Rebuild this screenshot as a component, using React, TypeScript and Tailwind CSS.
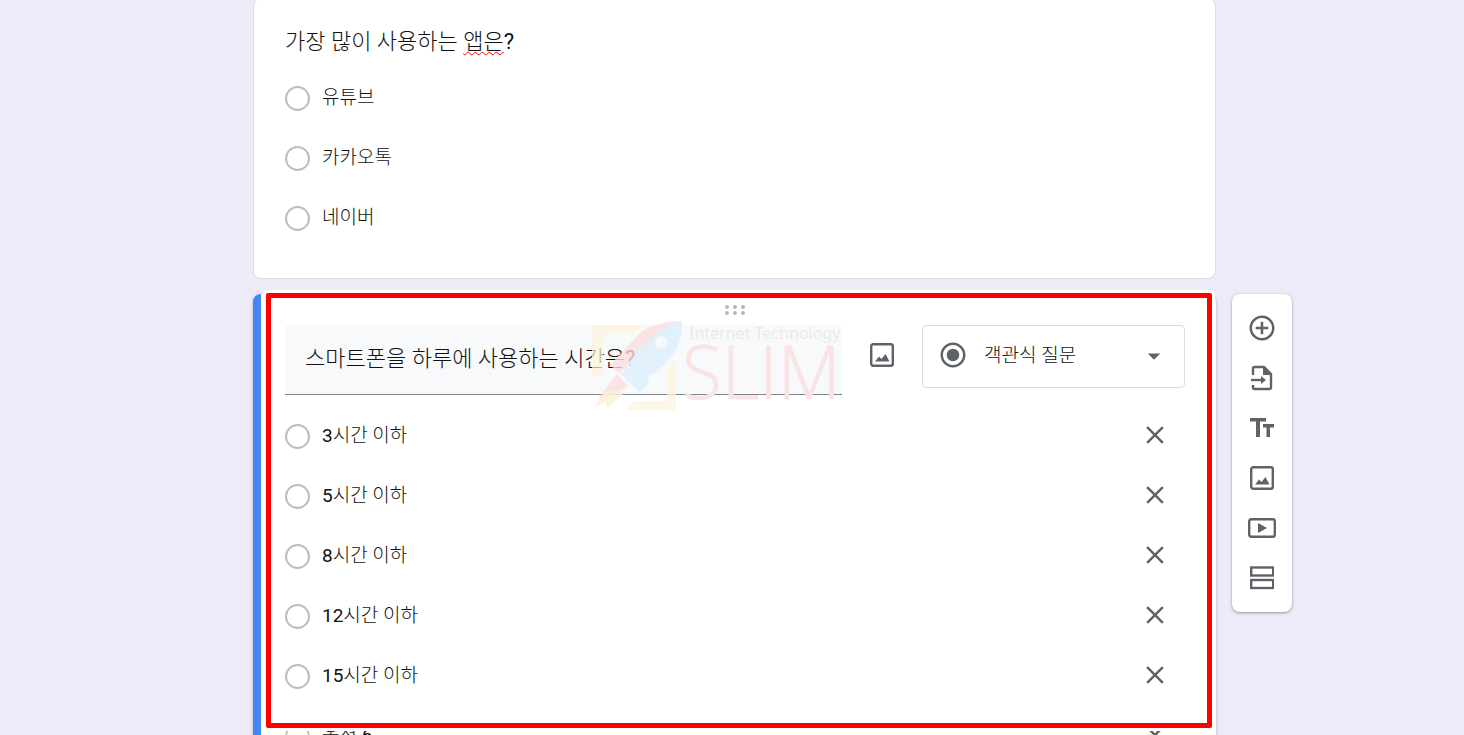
import { MdAddCircleOutline, MdArrowDropDown, MdClose, MdRadioButtonChecked } from 'react-icons/md';

const answers = ['유튜브', '카카오톡', '네이버'];
const options = ['3시간 이하', '5시간 이하', '8시간 이하', '12시간 이하', '15시간 이하', '옵션 6'];

function ImageIcon() {
  return <svg viewBox="0 0 24 24" className="size-6" fill="none">
    <rect x="1.200" y="1.200" width="21.600" height="21.600" rx="2" stroke="currentColor" strokeWidth="2.400"/>
    <path d="M5 18.500l4-5 2.500 2.500 4-5 4 7.500z" fill="currentColor"/>
  </svg>
}

function ImportIcon() {
  return <svg viewBox="0 0 22 26" className="h-[26px] w-[22px]" fill="none">
    <path d="M2 10V3.500C2 2.500 2.500 2 3.500 2H13l7 7v13.500c0 1-.5 1.500-1.500 1.500h-15C2.500 24 2 23.500 2 22.500V20" stroke="currentColor" strokeWidth="2.400"/>
    <path d="M12 1v9h9zM10 11l5 4-5 4z" fill="currentColor"/>
    <path d="M0 15h11" stroke="currentColor" strokeWidth="2.400"/>
  </svg>
}

function TextIcon() {
  return <svg viewBox="0 0 24 20" className="h-5 w-6" fill="currentColor">
    <path d="M0 0h16v3.500h-6V19H6V3.500H0zM13 6h11v3.500h-4V19h-3.500V9.500H13z"/>
  </svg>
}

function VideoIcon() {
  return <svg viewBox="0 0 28 20" className="h-5 w-7" fill="none">
    <rect x="1.200" y="1.200" width="25.600" height="17.600" rx="2" stroke="currentColor" strokeWidth="2.400"/>
    <path d="M10 5v10l9-5z" fill="currentColor"/>
  </svg>
}

function SectionIcon() {
  return <svg viewBox="0 0 24 24" className="size-6" fill="none" stroke="currentColor" strokeWidth="2.400">
    <rect x="1.200" y="1.500" width="22" height="8"/>
    <rect x="1.200" y="14" width="22" height="8"/>
  </svg>
}

function Watermark() {
  return <svg viewBox="0 0 256 92" className="pointer-events-none absolute top-[27px] left-[327px] h-[92px] w-[256px]">
    <path d="M4 58V4h52l-13 9H15v38zM79 49l9-9v49H38l8-9h33z" fill="#fdf3da" fillOpacity="0.7"/>
    <path d="M94 0C77 0 61 4 51 13L22 44l9 8 48-37z" fill="#f9dedd" fillOpacity="0.8"/>
    <path d="M94 0C78 4 64 14 51 28L33 53l19 19 9-10-1-6C79 44 96 26 94 0z" fill="#dff0fb" fillOpacity="0.9"/>
    <circle cx="73" cy="21" r="6" fill="#f8f9fa"/>
    <path d="M29 53l11 12-16 9-14 4z" fill="#f9dedd" fillOpacity="0.8"/>
    <path d="M18 70L5 88l13-7 1 7 19-18z" fill="#fdf0cf" fillOpacity="0.8"/>
    <text x="101" y="18" fontSize="16" fill="#e9eaed" fontFamily="Noto Sans, sans-serif">Internet Technology</text>
    <text x="94" y="78" fontSize="73" fontWeight="300" fill="#f9e4e5" stroke="#f9e4e5" fontFamily="Open Sans, sans-serif">SLIM</text>
  </svg>
}

export default function App() {
  return <div className="h-screen overflow-hidden bg-[#eeeaf8] pr-[172px] pl-[253px] font-[Roboto,'Noto_Sans_CJK_KR_Light','Noto_Sans_CJK_KR',sans-serif] text-[19px] text-[#111111]">
    <section className="-mt-0.5 mr-[76px] h-[281px] rounded-lg border border-[#dadce0] bg-white px-[31px] pt-[27px]">
      <h2 className="mb-[10px] text-[22px] leading-8">
        가장 많이 사용하는 <span className="underline decoration-[#ff0000] decoration-wavy decoration-1 underline-offset-2">앱은</span>?
      </h2>
      {answers.map((answer) => (
        <label key={answer} className="flex h-[60px] items-center gap-3">
          <input type="radio" name="app" className="size-[25px] appearance-none rounded-full border-2 border-[#bdbdbd]"/>
          <span className="leading-6">{answer}</span>
        </label>
      ))}
    </section>

    <div className="mt-[15px] flex items-start gap-4">
      <section className="relative min-w-0 flex-1 rounded-lg border-l-8 border-[#4285f4] bg-white pr-[31px] pl-6 shadow-[0_1px_3px_rgba(60,64,67,0.4)]">
        <button aria-label="질문 이동" className="absolute top-[11px] right-[7px] left-0 mx-auto grid w-5 grid-cols-3 gap-x-1 gap-y-0.5">
          {[0, 1, 2, 3, 4, 5].map((n) => <span key={n} className="size-1 rounded-full bg-[#b4b6b8]"/>)}
        </button>

        <div className="relative flex items-start pt-[31px]">
          <input
            aria-label="질문"
            defaultValue="스마트폰을 하루에 사용하는 시간은?"
            className="h-[70px] min-w-0 flex-1 rounded-t border-b border-[#80868b] bg-[#f8f9fb] px-5 pb-2 text-[22px]"
          />
          <button aria-label="이미지 추가" className="mx-7 mt-[18px] text-[#5f6368]"><ImageIcon/></button>
          <div className="relative h-[63px] w-[263px]">
            <select aria-label="질문 유형" className="size-full appearance-none rounded border border-[#dadce0] bg-transparent pl-[61px]">
              <option>객관식 질문</option>
            </select>
            <MdRadioButtonChecked className="pointer-events-none absolute top-[15px] left-4 size-[30px] text-[#5f6368]"/>
            <MdArrowDropDown className="pointer-events-none absolute top-4 right-4 size-[30px] text-[#5f6368]"/>
          </div>
        </div>

        <div className="pt-[11px]">
          {options.map((option) => (
            <div key={option} className="flex h-[60px] items-center justify-between">
              <label className="flex items-center gap-3">
                <input type="radio" name="time" className="size-[25px] appearance-none rounded-full border-2 border-[#bdbdbd]"/>
                <span className="leading-6">{option}</span>
              </label>
              <button aria-label={`${option} 삭제`} className="mr-[15px] pb-0.5 text-[#5f6368]"><MdClose className="size-[30px]"/></button>
            </div>
          ))}
        </div>

        {/* highlight frame */}
        <div className="pointer-events-none absolute -top-px right-1 left-[5px] h-[435px] rounded-xs border-5 border-[#ff0000] ring-3 ring-white"/>
        <Watermark/>
      </section>

      <nav aria-label="도구" className="flex w-[60px] flex-col items-center rounded-lg bg-white py-[9px] text-[#5f6368] shadow-[0_1px_3px_rgba(60,64,67,0.5)]">
        <button aria-label="질문 추가" className="grid size-[50px] place-items-center"><MdAddCircleOutline className="size-[30px]"/></button>
        <button aria-label="질문 가져오기" className="grid size-[50px] place-items-center"><ImportIcon/></button>
        <button aria-label="제목 추가" className="grid size-[50px] place-items-center"><TextIcon/></button>
        <button aria-label="이미지 추가" className="grid size-[50px] place-items-center"><ImageIcon/></button>
        <button aria-label="동영상 추가" className="grid size-[50px] place-items-center"><VideoIcon/></button>
        <button aria-label="섹션 추가" className="grid size-[50px] place-items-center"><SectionIcon/></button>
      </nav>
    </div>
  </div>
}
